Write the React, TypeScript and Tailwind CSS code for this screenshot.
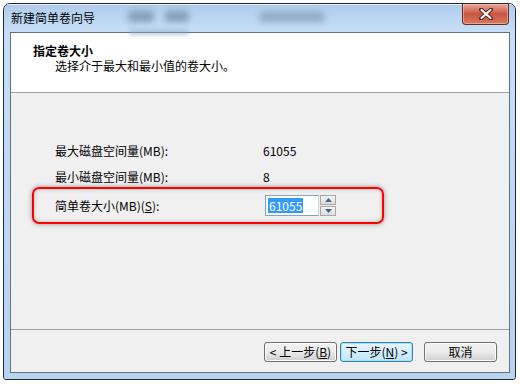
import React from "react";

const font = { fontFamily: '"Noto Sans CJK SC", "Liberation Sans", sans-serif' };

function Btn({ children, focused }: { children: React.ReactNode; focused?: boolean }) {
  return (
    <div
      className={
        "h-[20px] w-[73px] flex items-center justify-center rounded-[3px] text-[12px] text-black border " +
        (focused
          ? "border-[#3c7fb1] bg-gradient-to-b from-[#eaf6fd] to-[#bee6fd] shadow-[inset_0_0_0_1px_#9ee3fd]"
          : "border-[#707070] bg-gradient-to-b from-[#f2f2f2] via-[#ebebeb] to-[#cfcfcf] shadow-[inset_0_0_0_1px_#fcfcfc]")
      }
    >
      {children}
    </div>
  );
}

export default function App() {
  return (
    <div className="w-[520px] h-[384px] bg-white relative overflow-hidden" style={font}>
      <div className="ml-[3px] mt-[3px] w-[513px] h-[377px] border border-[#1f2a36] rounded-t-[7px] rounded-b-[3px] bg-[#c2daf3] flex flex-col overflow-hidden">
        {/* title bar */}
        <div className="relative h-[28px] shrink-0 bg-gradient-to-b from-[#aecbeb] via-[#bcd7f3] to-[#c6def5] border-t border-[#e8f2fb]">
          <div className="absolute left-[124px] top-[6px] w-[26px] h-[11px] rounded-[4px] bg-[#7890ab] blur-[3px] opacity-80" />
          <div className="absolute left-[161px] top-[6px] w-[24px] h-[11px] rounded-[4px] bg-[#7890ab] blur-[3px] opacity-80" />
          <div className="absolute left-[255px] top-[7px] w-[66px] h-[10px] rounded-[4px] bg-[#8098b2] blur-[3px] opacity-70" />
          <div className="absolute left-[125px] top-[25px] w-[60px] h-[5px] rounded-full bg-[#8ea4bd] blur-[2px] opacity-60" />
          <div className="absolute left-[7px] top-[5px] text-[12px] leading-[16px] text-black">新建简单卷向导</div>
          <div className="absolute left-[458px] top-[-1px] w-[47px] h-[21px] rounded-b-[4px] border border-[#6b2a25] border-t-0 bg-gradient-to-b from-[#e9a99c] via-[#c9543f] to-[#d77a5f] flex items-center justify-center shadow-[inset_0_0_0_1px_rgba(255,210,200,0.5)]">
            <svg width="14" height="12" viewBox="0 0 14 12">
              <path d="M2 1.5 L12 10.5 M12 1.5 L2 10.5" stroke="#5a2020" strokeWidth="4" strokeLinecap="round" />
              <path d="M2.5 2 L11.5 10 M11.5 2 L2.5 10" stroke="#ffffff" strokeWidth="2.2" strokeLinecap="round" />
            </svg>
          </div>
        </div>
        {/* body with frame */}
        <div className="flex-1 flex pl-[6px] pr-[5px] pb-[6px] bg-gradient-to-b from-[#c6def5] to-[#b8d3ef]">
          <div className="flex-1 flex flex-col border border-[#5f7286] bg-[#f0f0f0]">
            {/* header */}
            <div className="h-[60px] shrink-0 bg-white border-b border-[#a0a0a0] pl-[22px] pt-[10px]">
              <div className="text-[12px] leading-[16px] font-bold text-black">指定卷大小</div>
              <div className="text-[12px] leading-[16px] text-black pl-[22px] mt-[-1px]">选择介于最大和最小值的卷大小。</div>
            </div>
            {/* middle */}
            <div className="flex-1 pl-[21px] pt-[48px]">
              <div className="h-[20px] flex items-center pl-[23px] text-[12px] text-black">
                <span className="w-[208px]">最大磁盘空间量(MB):</span>
                <span>61055</span>
              </div>
              <div className="h-[20px] mt-[6px] flex items-center pl-[23px] text-[12px] text-black">
                <span className="w-[208px]">最小磁盘空间量(MB):</span>
                <span>8</span>
              </div>
              <div className="w-[352px] h-[37px] border-2 border-[#ff0000] rounded-[7px] shadow-[0_0_5px_rgba(0,0,0,0.4),inset_0_0_4px_rgba(0,0,0,0.25)] flex items-center pl-[21px] text-[12px] text-black">
                <span className="w-[210px]">简单卷大小(MB)(<span className="underline">S</span>):</span>
                <div className="flex items-center h-[21px]">
                  <div className="w-[54px] h-[21px] border border-[#7ea4c6] border-r-[#c4d4e3] bg-white flex items-center pl-[2px]">
                    <span className="bg-[#3399ff] text-white leading-[15px] px-[1px]">61055</span>
                  </div>
                  <div className="ml-[1px] w-[16px] h-[21px] flex flex-col gap-[1px]">
                    <div className="flex-1 border border-[#a8a8a8] bg-gradient-to-b from-[#f5f5f5] to-[#dcdcdc] flex items-center justify-center">
                      <svg width="7" height="4" viewBox="0 0 7 4"><path d="M0 4 L3.5 0 L7 4 Z" fill="#4d6185" /></svg>
                    </div>
                    <div className="flex-1 border border-[#a8a8a8] bg-gradient-to-b from-[#f5f5f5] to-[#dcdcdc] flex items-center justify-center">
                      <svg width="7" height="4" viewBox="0 0 7 4"><path d="M0 0 L7 0 L3.5 4 Z" fill="#4d6185" /></svg>
                    </div>
                  </div>
                </div>
              </div>
            </div>
            {/* bottom */}
            <div className="h-[43px] shrink-0 border-t border-[#a0a0a0] flex pt-[12px] pl-[253px] gap-0">
              <Btn>&lt; 上一步(<span className="underline">B</span>)</Btn>
              <div className="ml-[3px]">
                <Btn focused>下一步(<span className="underline">N</span>) &gt;</Btn>
              </div>
              <div className="ml-[11px]">
                <Btn>取消</Btn>
              </div>
            </div>
          </div>
        </div>
      </div>
    </div>
  );
}
